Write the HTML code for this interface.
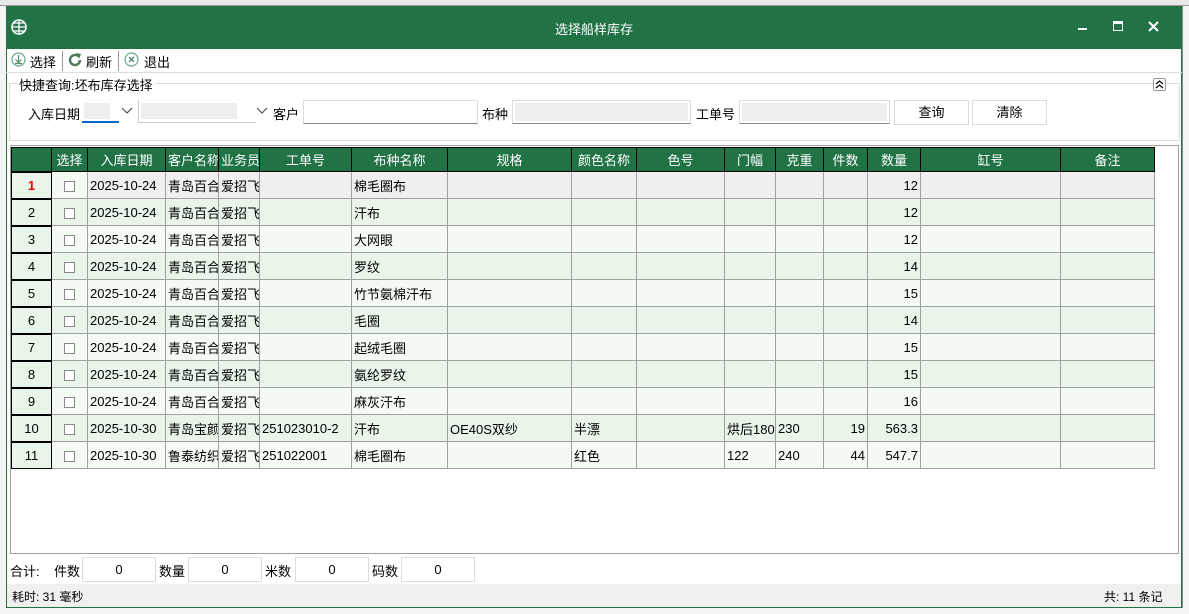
<!DOCTYPE html>
<html><head><meta charset="utf-8"><style>
*{margin:0;padding:0;box-sizing:border-box}
body{width:1189px;height:614px;overflow:hidden;background:#fff;font-family:"Liberation Sans","Noto Sans CJK SC",sans-serif;font-size:12px;color:#000;position:relative}
.abs{position:absolute}
table{border-collapse:collapse;table-layout:fixed}
td,th{border:1px solid #a0a0a0;height:27px;white-space:nowrap;overflow:hidden;padding:0 2px;font-weight:normal;font-size:13px}
th{background:#217346;color:#fff;border:1px solid #000;height:24px;text-align:center}
tr.o td{background:#f3fbf3}
tr.e td{background:#e8f5e8}
tr.s td{background:#efefef}
td.n{background:#e9f5e9!important;border:1px solid #000;border-width:2px 1px 1px 1px;text-align:center}
td.c{text-align:center}
td.r{text-align:right}
.cb{display:inline-block;width:11px;height:11px;border:1px solid #888;background:#fff;vertical-align:middle}
.inp{position:absolute;border:1px solid #ddd;background:#fff;text-align:center;line-height:24px;height:26px;font-size:13px}
</style></head><body>
<div class="abs" style="left:0;top:0;width:1189px;height:6px;background:#e8e8e8;border-bottom:1px solid #999"></div>
<div class="abs" style="left:0;top:6px;width:6px;height:608px;background:#f4f4f4"></div>
<div class="abs" style="left:1182px;top:6px;width:7px;height:608px;background:#f4f4f4;border-left:1px solid #888"></div>
<div class="abs" style="left:0;top:608px;width:1189px;height:6px;background:#f4f4f4"></div>
<div class="abs" style="left:6px;top:6px;width:1176px;height:602px;background:#fff;border:1px solid #217346"></div>
<div class="abs" style="left:6px;top:6px;width:1176px;height:43px;background:#217346;color:#fff">
 <svg class="abs" style="left:5px;top:13px" width="16" height="16" viewBox="0 0 16 16"><circle cx="8" cy="8" r="7" fill="none" stroke="#fff" stroke-width="1.6"/><path d="M1 8h14M8 1v14M3 4h10M3 12h10" stroke="#fff" stroke-width="1.3" fill="none"/></svg>
 <div class="abs" style="left:0;width:1176px;top:13px;text-align:center;font-size:13px">选择船样库存</div>
 <div class="abs" style="left:1072px;top:22px;width:9px;height:2px;background:#fff"></div>
 <div class="abs" style="left:1107px;top:15px;width:10px;height:10px;border:1.5px solid #fff;border-top-width:3px"></div>
 <svg class="abs" style="left:1142px;top:15px" width="11" height="11"><path d="M1 1l9 9M10 1l-9 9" stroke="#fff" stroke-width="2"/></svg>
</div>
<div class="abs" style="left:6px;top:49px;width:1176px;height:24px;border-bottom:1px solid #ddd"></div>
<svg class="abs" style="left:11px;top:52px" width="15" height="15"><circle cx="7.5" cy="7.5" r="6.5" fill="none" stroke="#6a8" stroke-width="1.2"/><path d="M7.5 3v7M4.5 7.5l3 3 3-3M4 11.5h7" stroke="#586" fill="none" stroke-width="1.2"/></svg>
<div class="abs" style="left:30px;top:52px;font-size:13px">选择</div>
<div class="abs" style="left:62px;top:51px;width:1px;height:20px;background:#999"></div>
<svg class="abs" style="left:67px;top:52px" width="16" height="16"><path d="M13 8A5 5 0 1 1 11 4" fill="none" stroke="#4a7a5a" stroke-width="2.4"/><path d="M9 1l5 1-2 5z" fill="#4a7a5a"/></svg>
<div class="abs" style="left:86px;top:52px;font-size:13px">刷新</div>
<div class="abs" style="left:118px;top:51px;width:1px;height:20px;background:#999"></div>
<svg class="abs" style="left:124px;top:52px" width="15" height="15"><circle cx="7.5" cy="7.5" r="6.5" fill="none" stroke="#6a8" stroke-width="1.2"/><path d="M5 5l5 5M10 5l-5 5" stroke="#586" stroke-width="1.3"/></svg>
<div class="abs" style="left:144px;top:52px;font-size:13px">退出</div>
<div class="abs" style="left:9px;top:83px;width:1171px;height:58px;border:1px solid #ddd"></div>
<div class="abs" style="left:17px;top:75px;background:#fff;padding:0 2px;font-size:13px">快捷查询:坯布库存选择</div>
<div class="abs" style="left:1153px;top:78px;width:13px;height:13px;border:1px solid #999;border-radius:2px;background:#fff"><svg width="11" height="11"><path d="M2 5l3.5-3 3.5 3M2 9l3.5-3 3.5 3" fill="none" stroke="#000" stroke-width="1.2"/></svg></div>
<div class="abs" style="left:28px;top:104px;font-size:13px">入库日期</div>
<div class="abs" style="left:82px;top:100px;width:37px;height:23px;border-bottom:2px solid #0a6acb"><div style="margin:3px 0 0 2px;width:26px;height:16px;background:#eee"></div></div>
<svg class="abs" style="left:121px;top:107px" width="12" height="8"><path d="M1 1l5 5 5-5" fill="none" stroke="#555" stroke-width="1.2"/></svg>
<div class="abs" style="left:138px;top:100px;width:118px;height:23px;border:1px solid #ccc;border-width:0 0 1px 1px"><div style="margin:3px 0 0 2px;width:96px;height:16px;background:#eee"></div></div>
<svg class="abs" style="left:256px;top:107px" width="12" height="8"><path d="M1 1l5 5 5-5" fill="none" stroke="#555" stroke-width="1.2"/></svg>
<div class="abs" style="left:273px;top:104px;font-size:13px">客户</div>
<div class="abs" style="left:303px;top:100px;width:175px;height:24px;border:1px solid #ddd;border-bottom-color:#888"></div>
<div class="abs" style="left:482px;top:104px;font-size:13px">布种</div>
<div class="abs" style="left:512px;top:100px;width:179px;height:24px;border:1px solid #ddd;border-bottom-color:#888"><div style="margin:2px;height:18px;background:#eee"></div></div>
<div class="abs" style="left:696px;top:104px;font-size:13px">工单号</div>
<div class="abs" style="left:739px;top:100px;width:151px;height:24px;border:1px solid #ddd;border-bottom-color:#888"><div style="margin:2px;height:18px;background:#eee"></div></div>
<div class="inp" style="left:894px;top:100px;width:75px;height:25px">查询</div>
<div class="inp" style="left:972px;top:100px;width:75px;height:25px">清除</div>
<div class="abs" style="left:10px;top:145px;width:1169px;height:409px;border:1px solid #a0a0a0"></div>
<table class="abs" style="left:11px;top:147px;width:1144px">
<colgroup><col style="width:40px"><col style="width:36px"><col style="width:78px"><col style="width:53px"><col style="width:41px"><col style="width:92px"><col style="width:96px"><col style="width:124px"><col style="width:65px"><col style="width:88px"><col style="width:51px"><col style="width:48px"><col style="width:44px"><col style="width:53px"><col style="width:140px"><col style="width:94px"></colgroup>
<tr><th></th><th>选择</th><th>入库日期</th><th>客户名称</th><th>业务员</th><th>工单号</th><th>布种名称</th><th>规格</th><th>颜色名称</th><th>色号</th><th>门幅</th><th>克重</th><th>件数</th><th>数量</th><th>缸号</th><th>备注</th></tr>
<tr class="s" style="height:26px"><td class="n" style="color:#e00;font-weight:bold">1</td><td class="c" style="background:#f3fbf3"><span class="cb"></span></td><td>2025-10-24</td><td>青岛百合</td><td>爱招飞</td><td></td><td>棉毛圈布</td><td></td><td></td><td></td><td></td><td></td><td></td><td class="r">12</td><td></td><td></td></tr>
<tr class="e"><td class="n">2</td><td class="c"><span class="cb"></span></td><td>2025-10-24</td><td>青岛百合</td><td>爱招飞</td><td></td><td>汗布</td><td></td><td></td><td></td><td></td><td></td><td></td><td class="r">12</td><td></td><td></td></tr>
<tr class="o"><td class="n">3</td><td class="c"><span class="cb"></span></td><td>2025-10-24</td><td>青岛百合</td><td>爱招飞</td><td></td><td>大网眼</td><td></td><td></td><td></td><td></td><td></td><td></td><td class="r">12</td><td></td><td></td></tr>
<tr class="e"><td class="n">4</td><td class="c"><span class="cb"></span></td><td>2025-10-24</td><td>青岛百合</td><td>爱招飞</td><td></td><td>罗纹</td><td></td><td></td><td></td><td></td><td></td><td></td><td class="r">14</td><td></td><td></td></tr>
<tr class="o"><td class="n">5</td><td class="c"><span class="cb"></span></td><td>2025-10-24</td><td>青岛百合</td><td>爱招飞</td><td></td><td>竹节氨棉汗布</td><td></td><td></td><td></td><td></td><td></td><td></td><td class="r">15</td><td></td><td></td></tr>
<tr class="e"><td class="n">6</td><td class="c"><span class="cb"></span></td><td>2025-10-24</td><td>青岛百合</td><td>爱招飞</td><td></td><td>毛圈</td><td></td><td></td><td></td><td></td><td></td><td></td><td class="r">14</td><td></td><td></td></tr>
<tr class="o"><td class="n">7</td><td class="c"><span class="cb"></span></td><td>2025-10-24</td><td>青岛百合</td><td>爱招飞</td><td></td><td>起绒毛圈</td><td></td><td></td><td></td><td></td><td></td><td></td><td class="r">15</td><td></td><td></td></tr>
<tr class="e"><td class="n">8</td><td class="c"><span class="cb"></span></td><td>2025-10-24</td><td>青岛百合</td><td>爱招飞</td><td></td><td>氨纶罗纹</td><td></td><td></td><td></td><td></td><td></td><td></td><td class="r">15</td><td></td><td></td></tr>
<tr class="o"><td class="n">9</td><td class="c"><span class="cb"></span></td><td>2025-10-24</td><td>青岛百合</td><td>爱招飞</td><td></td><td>麻灰汗布</td><td></td><td></td><td></td><td></td><td></td><td></td><td class="r">16</td><td></td><td></td></tr>
<tr class="e"><td class="n">10</td><td class="c"><span class="cb"></span></td><td>2025-10-30</td><td>青岛宝颜</td><td>爱招飞</td><td>251023010-2</td><td>汗布</td><td>OE40S双纱</td><td>半漂</td><td></td><td>烘后180</td><td>230</td><td class="r">19</td><td class="r">563.3</td><td></td><td></td></tr>
<tr class="o"><td class="n">11</td><td class="c"><span class="cb"></span></td><td>2025-10-30</td><td>鲁泰纺织</td><td>爱招飞</td><td>251022001</td><td>棉毛圈布</td><td></td><td>红色</td><td></td><td>122</td><td>240</td><td class="r">44</td><td class="r">547.7</td><td></td><td></td></tr>
</table>
<div class="abs" style="left:10px;top:561px;font-size:13px">合计:</div>
<div class="abs" style="left:54px;top:561px;font-size:13px">件数</div>
<div class="inp" style="left:82px;top:557px;width:74px;height:25px">0</div>
<div class="abs" style="left:159px;top:561px;font-size:13px">数量</div>
<div class="inp" style="left:188px;top:557px;width:74px;height:25px">0</div>
<div class="abs" style="left:265px;top:561px;font-size:13px">米数</div>
<div class="inp" style="left:295px;top:557px;width:74px;height:25px">0</div>
<div class="abs" style="left:372px;top:561px;font-size:13px">码数</div>
<div class="inp" style="left:401px;top:557px;width:74px;height:25px">0</div>
<div class="abs" style="left:7px;top:584px;width:1174px;height:23px;background:#f0f0f0"></div>
<div class="abs" style="left:12px;top:588px">耗时: 31 毫秒</div>
<div class="abs" style="left:1104px;top:588px">共: 11 条记</div>
</body></html>
